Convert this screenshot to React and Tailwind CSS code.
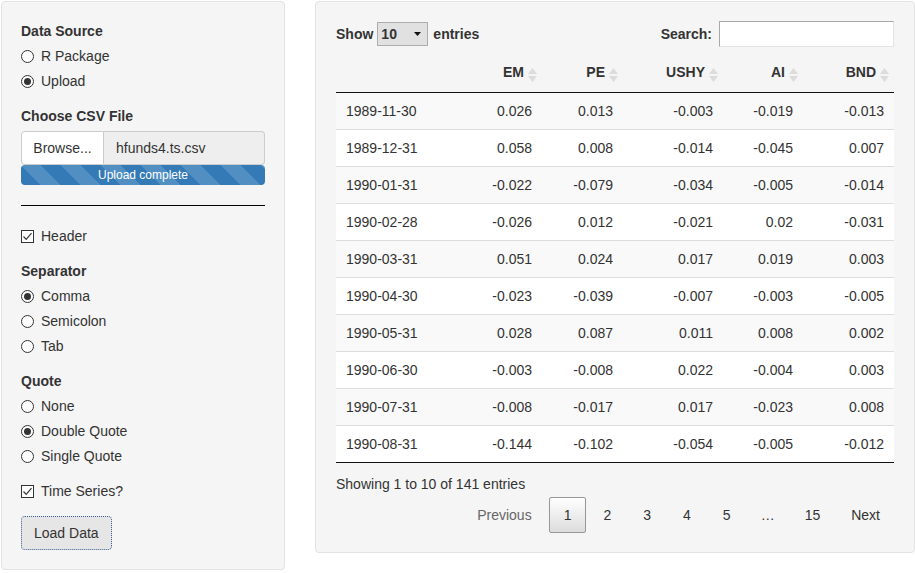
import React from "react";

const rows = [
  ["1989-11-30", "0.026", "0.013", "-0.003", "-0.019", "-0.013"],
  ["1989-12-31", "0.058", "0.008", "-0.014", "-0.045", "0.007"],
  ["1990-01-31", "-0.022", "-0.079", "-0.034", "-0.005", "-0.014"],
  ["1990-02-28", "-0.026", "0.012", "-0.021", "0.02", "-0.031"],
  ["1990-03-31", "0.051", "0.024", "0.017", "0.019", "0.003"],
  ["1990-04-30", "-0.023", "-0.039", "-0.007", "-0.003", "-0.005"],
  ["1990-05-31", "0.028", "0.087", "0.011", "0.008", "0.002"],
  ["1990-06-30", "-0.003", "-0.008", "0.022", "-0.004", "0.003"],
  ["1990-07-31", "-0.008", "-0.017", "0.017", "-0.023", "0.008"],
  ["1990-08-31", "-0.144", "-0.102", "-0.054", "-0.005", "-0.012"],
];

const cols = ["EM", "PE", "USHY", "AI", "BND"];
const widths = ["w-[119px]", "w-[87px]", "w-[81px]", "w-[100px]", "w-[80px]", "w-[91px]"];

function Radio({ label, checked }) {
  return (
    <div className="flex items-center h-5">
      <span className="w-[13px] h-[13px] rounded-full border border-[#333] bg-white flex items-center justify-center">
        {checked && <span className="w-[7px] h-[7px] rounded-full bg-[#333]" />}
      </span>
      <span className="ml-[7px]">{label}</span>
    </div>
  );
}

function Checkbox({ label }) {
  return (
    <div className="flex items-center h-5">
      <span className="w-[13px] h-[13px] border border-[#333] bg-white flex items-center justify-center">
        <svg width="11" height="11" viewBox="0 0 11 11">
          <path d="M1.5 5.5 L4.2 8.3 L9.5 2.2" fill="none" stroke="#333" strokeWidth="1.2" />
        </svg>
      </span>
      <span className="ml-[7px]">{label}</span>
    </div>
  );
}

function SortIcon() {
  return (
    <svg width="9" height="14" viewBox="0 0 9 14" className="absolute right-[5px] top-[22px]">
      <path d="M4.5 0 L9 6 L0 6 Z" fill="#dcdcdc" />
      <path d="M0 8 L9 8 L4.5 14 Z" fill="#dcdcdc" />
    </svg>
  );
}

function Sidebar() {
  return (
    <div className="w-[284px] bg-[#f5f5f5] border border-[#e3e3e3] rounded p-[19px] flex flex-col">
      <div className="font-bold h-5">Data Source</div>
      <div className="mt-[5px] flex flex-col gap-[5px]">
        <Radio label="R Package" />
        <Radio label="Upload" checked />
      </div>

      <div className="font-bold h-5 mt-[15px]">Choose CSV File</div>
      <div className="mt-[5px] flex h-[34px]">
        <div className="w-[83px] bg-white border border-[#ccc] rounded-l flex items-center justify-center">
          Browse...
        </div>
        <div className="flex-1 bg-[#eee] border border-l-0 border-[#ccc] rounded-r flex items-center pl-3">
          hfunds4.ts.csv
        </div>
      </div>
      <div className="h-5 rounded bg-[#337ab7] bg-[linear-gradient(45deg,rgba(255,255,255,.15)_25%,transparent_25%,transparent_50%,rgba(255,255,255,.15)_50%,rgba(255,255,255,.15)_75%,transparent_75%,transparent)] bg-size-[40px_40px] text-white text-xs flex items-center justify-center">
        Upload complete
      </div>

      <div className="mt-5 border-t border-black" />

      <div className="mt-5">
        <Checkbox label="Header" />
      </div>

      <div className="font-bold h-5 mt-[15px]">Separator</div>
      <div className="mt-[5px] flex flex-col gap-[5px]">
        <Radio label="Comma" checked />
        <Radio label="Semicolon" />
        <Radio label="Tab" />
      </div>

      <div className="font-bold h-5 mt-[15px]">Quote</div>
      <div className="mt-[5px] flex flex-col gap-[5px]">
        <Radio label="None" />
        <Radio label="Double Quote" checked />
        <Radio label="Single Quote" />
      </div>

      <div className="mt-[15px]">
        <Checkbox label="Time Series?" />
      </div>

      <div className="mt-[15px]">
        <button className="h-[34px] px-3 bg-[#e6e6e6] border border-dotted border-[#3b5f92] rounded">
          Load Data
        </button>
      </div>
    </div>
  );
}

function PageBtn({ children, active, muted, px = "px-[14px]" }) {
  return (
    <span
      className={
        "h-[36px] ml-[2px] flex items-center border rounded-[2px] " +
        px +
        " " +
        (active
          ? "border-[#979797] bg-[linear-gradient(to_bottom,#fff_0%,#dcdcdc_100%)]"
          : "border-transparent") +
        (muted ? " text-[#666]" : " text-[#333]")
      }
    >
      {children}
    </span>
  );
}

function DataPanel() {
  return (
    <div className="w-[600px] bg-[#f5f5f5] border border-[#e3e3e3] rounded px-[20px] pt-[20px] pb-[19px]">
      <div className="flex items-center justify-between h-[24px]">
        <div className="flex items-center font-bold">
          <span>Show</span>
          <span className="ml-[4px] w-[51px] h-[24px] bg-[#e1e1e1] border border-[#adadad] flex items-center justify-between pl-[3px] pr-[6px]">
            <span>10</span>
            <svg width="7" height="4" viewBox="0 0 7 4">
              <path d="M0 0 L7 0 L3.5 4 Z" fill="#111" />
            </svg>
          </span>
          <span className="ml-[5px]">entries</span>
        </div>
        <div className="flex items-center font-bold">
          <span>Search:</span>
          <span className="ml-[7px] w-[175px] h-[26px] bg-white border border-[#a9a9a9] border-b-[#e3e3e3] border-r-[#e3e3e3]" />
        </div>
      </div>

      <table className="table-fixed w-[558px] border-collapse">
        <thead>
          <tr className="border-b border-[#111]">
            <th className={widths[0] + " h-[46px]"} />
            {cols.map((c, i) => (
              <th key={c} className={widths[i + 1] + " relative text-right font-bold pt-[16px] pb-[10px] pr-[18px] leading-5"}>
                {c}
                <SortIcon />
              </th>
            ))}
          </tr>
        </thead>
        <tbody>
          {rows.map((r, i) => (
            <tr key={r[0]} className={(i % 2 === 0 ? "bg-[#f9f9f9]" : "bg-white") + (i > 0 ? " border-t border-[#ddd]" : "")}>
              {r.map((v, j) => (
                <td key={j} className={"py-2 px-[10px] leading-5 " + (j === 0 ? "text-left" : "text-right")}>
                  {v}
                </td>
              ))}
            </tr>
          ))}
        </tbody>
        <tfoot>
          <tr className="border-t border-[#111]">
            <td colSpan={6} />
          </tr>
        </tfoot>
      </table>

      <div className="pt-[11px] leading-5">Showing 1 to 10 of 141 entries</div>
      <div className="mt-[3px] flex justify-end">
        <PageBtn muted>Previous</PageBtn>
        <PageBtn active>1</PageBtn>
        <PageBtn>2</PageBtn>
        <PageBtn>3</PageBtn>
        <PageBtn>4</PageBtn>
        <PageBtn>5</PageBtn>
        <span className="h-[36px] px-[13px] ml-[2px] flex items-center text-[#333]">…</span>
        <PageBtn>15</PageBtn>
        <PageBtn px="px-[13px]">Next</PageBtn>
      </div>
    </div>
  );
}

export default function App() {
  return (
    <div className="w-[915px] h-[573px] bg-white text-[#333] text-sm font-['Liberation_Sans',Arial,sans-serif] flex items-start pt-[1px] pl-[1px]">
      <Sidebar />
      <div className="ml-[30px]">
        <DataPanel />
      </div>
    </div>
  );
}
